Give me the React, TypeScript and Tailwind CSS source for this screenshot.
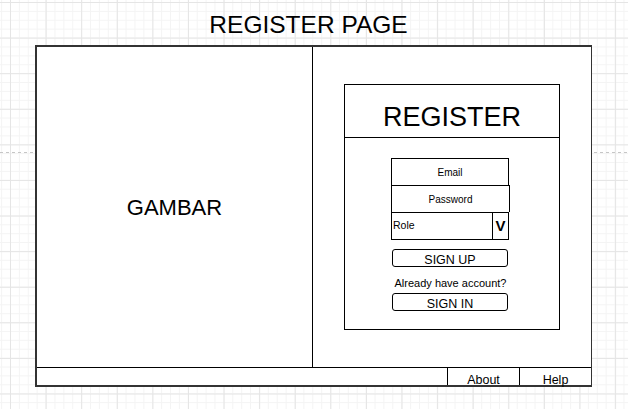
export default function App() {
  return (
    <div className="w-[628px] h-[409px] overflow-hidden bg-white text-black font-['Liberation_Sans',Arial,sans-serif] [background-image:linear-gradient(to_right,#c6c6c6_50%,transparent_50%),linear-gradient(to_right,#e5e5e5_1px,transparent_1px),linear-gradient(to_bottom,#e5e5e5_1px,transparent_1px),linear-gradient(to_right,#f4f4f4_1px,transparent_1px),linear-gradient(to_bottom,#f4f4f4_1px,transparent_1px)] [background-size:6px_1px,35.6px_35.6px,35.6px_35.6px,8.9px_8.9px,8.9px_8.9px] [background-position:0_152px,10px_2px,10px_2px,10px_2px,10px_2px] [background-repeat:repeat-x,repeat,repeat,repeat,repeat]">
      <h1 className="h-[45px] pt-[13px] pr-[11px] text-center text-[24.5px] leading-[24.5px]">
        REGISTER PAGE
      </h1>

      <div className="ml-[35px] w-[557px] h-[342px] flex flex-col bg-white border-t-2 border-l-2 border-b-2 border-r border-[#333]">
        <div className="flex flex-1">
          {/* image placeholder */}
          <div className="w-[276px] flex items-center justify-center border-r border-black">
            <span className="text-[22px] leading-none pt-[2px]">GAMBAR</span>
          </div>

          <div className="flex flex-1 items-center justify-center">
            <div className="w-[216px] h-[246px] flex flex-col border border-black">
              <div className="h-[53px] pt-[19px] border-b border-black text-center text-[27px] leading-[27px]">
                REGISTER
              </div>

              <div className="pl-[46px] pt-[20px]">
                <div className="w-[118px] h-[27px] flex items-center justify-center border-x border-t border-black text-[10px]">
                  Email
                </div>
                <div className="w-[119px] h-[27px] flex items-center justify-center border-x border-t border-black text-[10px]">
                  Password
                </div>
                <div className="w-[118px] h-[28px] flex border border-black">
                  <div className="flex flex-1 items-center pl-[1px] text-[10.5px]">Role</div>
                  <div className="w-[16px] flex items-center justify-center border-l border-black text-[15px] font-bold">
                    V
                  </div>
                </div>

                <button className="ml-[1px] mt-[9px] w-[116px] h-[18px] flex items-center justify-center pt-[4px] border border-black rounded-[3px] text-[12.5px] leading-none">
                  SIGN UP
                </button>
                <p className="mt-[10px] w-[119px] text-center text-[11px] leading-[13px]">
                  Already have account?
                </p>
                <button className="ml-[1px] mt-[3px] w-[116px] h-[18px] flex items-center justify-center pt-[4px] border border-black rounded-[3px] text-[12.5px] leading-none">
                  SIGN IN
                </button>
              </div>
            </div>
          </div>
        </div>

        <div className="h-[18px] flex border-t border-black text-[12.5px] leading-[13px]">
          <div className="flex-1" />
          <div className="w-[72px] pt-[6px] text-center border-l border-black">About</div>
          <div className="w-[72px] pt-[6px] text-center border-l border-black">Help</div>
        </div>
      </div>
    </div>
  );
}
